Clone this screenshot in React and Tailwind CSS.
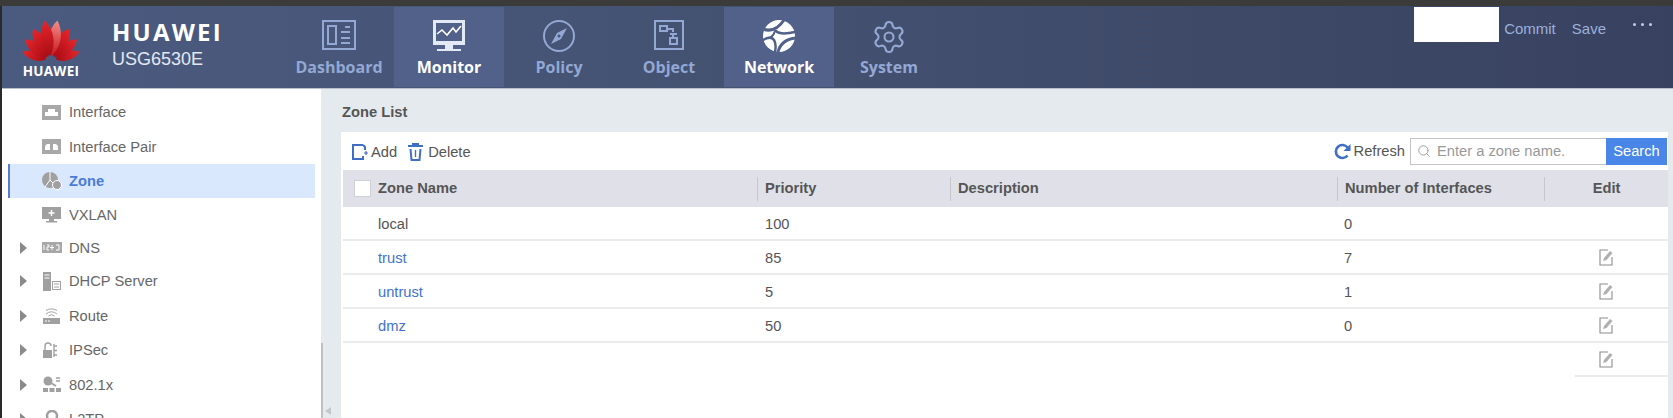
import { Settings, Search } from 'lucide-react';

const sans = 'font-["Liberation_Sans",Arial,sans-serif]';

function Logo() {
    const petals = [
        { a: 72, l: 30, w: 6, c: 'url(#petal)' },
        { a: -72, l: 30, w: 6, c: 'url(#petal)' },
        { a: 50, l: 34, w: 7, c: 'url(#petal)' },
        { a: -50, l: 34, w: 7, c: 'url(#petal)' },
        { a: 29, l: 37, w: 8, c: 'url(#petal)' },
        { a: -29, l: 37, w: 8, c: 'url(#petal)' },
        { a: 9, l: 41, w: 8, c: 'url(#petalTop)' },
        { a: -9, l: 41, w: 8, c: 'url(#petal)' },
    ];
    return (
        <svg width="60" height="42" viewBox="0 0 60 42">
            <defs>
                <linearGradient id="petal" x1="0" y1="0" x2="0" y2="1">
                    <stop offset="0" stopColor="#e8252c" />
                    <stop offset="1" stopColor="#a80c14" />
                </linearGradient>
                <linearGradient id="petalTop" x1="0" y1="0" x2="0" y2="1">
                    <stop offset="0" stopColor="#f0908a" />
                    <stop offset="1" stopColor="#c8141c" />
                </linearGradient>
            </defs>
            {petals.map((p, i) => (
                <path
                    key={i}
                    transform={`translate(30 42) rotate(${p.a})`}
                    d={`M0 -5 C ${-p.w} ${-p.l * 0.4} ${-p.w} ${-p.l * 0.75} 0 ${-p.l} C ${p.w} ${-p.l * 0.75} ${p.w} ${-p.l * 0.4} 0 -5 Z`}
                    fill={p.c}
                />
            ))}
        </svg>
    );
}

function DashboardIcon() {
    return (
        <svg width="36" height="32" viewBox="0 0 36 32" fill="none" stroke="currentColor" strokeWidth="2">
            <rect x="2" y="2" width="32" height="28" />
            <rect x="7" y="7" width="8" height="18" />
            <path d="M24 8h5M20 13h9M20 19h9M20 24h9" />
        </svg>
    );
}

function MonitorIcon() {
    return (
        <svg width="36" height="34" viewBox="0 0 36 34">
            <rect x="2" y="1" width="32" height="25" fill="#e4e9f6" />
            <rect x="5" y="4" width="26" height="18" fill="#52618a" />
            <path d="M6 15l5-4 5 5 6-7 3 4 5-6" fill="none" stroke="#fff" strokeWidth="1.6" />
            <rect x="14" y="26" width="8" height="4" fill="#e4e9f6" />
            <rect x="6" y="30" width="24" height="2" fill="#e4e9f6" />
        </svg>
    );
}

function PolicyIcon() {
    return (
        <svg width="34" height="34" viewBox="0 0 34 34" fill="none" stroke="currentColor" strokeWidth="2">
            <circle cx="17" cy="17" r="15" />
            <path d="M25 9l-10 5-6 11 10-5z" fill="currentColor" stroke="none" />
            <circle cx="17" cy="17" r="1.5" fill="#46567a" stroke="none" />
        </svg>
    );
}

function ObjectIcon() {
    return (
        <svg width="32" height="32" viewBox="0 0 32 32" fill="none" stroke="currentColor" strokeWidth="2">
            <rect x="2" y="2" width="28" height="28" />
            <rect x="7" y="7" width="7" height="5" />
            <rect x="17" y="19" width="7" height="6" />
            <path d="M14 10h6v3M17 15h7M20 15v4" />
        </svg>
    );
}

function NetworkIcon() {
    return (
        <svg width="34" height="34" viewBox="0 0 34 34" fill="none" stroke="#52618a" strokeLinecap="round">
            <circle cx="17" cy="17" r="16" fill="#fff" stroke="none" />
            <path d="M1 10C9 13 16 10 22 1" strokeWidth="3" />
            <path d="M14 12c3 3 10 3 19 1" strokeWidth="2.5" />
            <path d="M13 12c-1 3-2 5-4 6" strokeWidth="2" />
            <path d="M1 21c5-3 9-3 11 0 2 3 2 7 1 12" strokeWidth="2.5" />
            <path d="M16 33c2-8 8-13 18-14" strokeWidth="3" />
        </svg>
    );
}

function NavItem({ label, active, icon }) {
    return (
        <div className={`w-[110px] h-[80px] mt-px flex flex-col items-center ${active ? 'bg-[#52618a] text-white' : 'text-[#93a8d4]'}`}>
            <div className="h-[38px] mt-[12px] flex items-start justify-center">{icon}</div>
            <span className='text-[16px] font-bold leading-[20px] font-["Open_Sans",sans-serif]'>{label}</span>
        </div>
    );
}

function Arrow() {
    return <span className="w-0 h-0 border-y-[6px] border-y-transparent border-l-[7px] border-l-[#8a8a8a]" />;
}

const sideIcons = {
    iface: (
        <svg width="19" height="15" viewBox="0 0 19 15">
            <rect width="19" height="15" fill="#a8a8a8" />
            <path d="M3 11V7h3V4h7v3h3v4z" fill="#fff" />
        </svg>
    ),
    pair: (
        <svg width="19" height="15" viewBox="0 0 19 15">
            <rect width="19" height="15" fill="#a8a8a8" />
            <path d="M3 11V7l2-2h3v6zM11 11V5h3l2 2v4z" fill="#fff" />
        </svg>
    ),
    zone: (
        <svg width="20" height="18" viewBox="0 0 20 18">
            <circle cx="8" cy="8" r="8" fill="#a0a0a0" />
            <path d="M8 8L3 15M8 8l5 5M8 0v8" stroke="#fff" strokeWidth="1" />
            <circle cx="15" cy="13" r="4.5" fill="#a0a0a0" stroke="#fff" strokeWidth="1" />
        </svg>
    ),
    vxlan: (
        <svg width="19" height="16" viewBox="0 0 19 16">
            <rect width="19" height="12" fill="#a0a0a0" />
            <path d="M9.5 3v6M6.5 6h6" stroke="#fff" strokeWidth="1.4" />
            <path d="M7 12h5v2h3v1.5H4V14h3z" fill="#a0a0a0" />
        </svg>
    ),
    dns: (
        <svg width="20" height="11" viewBox="0 0 20 11">
            <rect width="20" height="11" fill="#a8a8a8" />
            <path d="M2 3v5M5 3h2v2H5v3h2M10 3v5M8 5.5h4M14 3h3v5h-3" stroke="#fff" strokeWidth="1" fill="none" />
        </svg>
    ),
    dhcp: (
        <svg width="19" height="19" viewBox="0 0 19 19">
            <rect x="1" width="8" height="19" fill="#a0a0a0" />
            <path d="M2.5 3h5M2.5 6h5" stroke="#fff" />
            <rect x="10.5" y="9.5" width="8" height="8" fill="none" stroke="#a0a0a0" />
            <path d="M12 12h5M12 15h5" stroke="#a0a0a0" />
        </svg>
    ),
    route: (
        <svg width="19" height="18" viewBox="0 0 19 18" fill="none">
            <path d="M4 7a8 8 0 0 1 11 0M6.5 9a4.5 4.5 0 0 1 6 0" stroke="#a0a0a0" />
            <path d="M4 3.5a11 11 0 0 1 11 0" stroke="#a0a0a0" />
            <rect x="1" y="11" width="17" height="6" fill="#a0a0a0" />
            <path d="M3 14h2M6 14h2" stroke="#fff" />
        </svg>
    ),
    ipsec: (
        <svg width="18" height="17" viewBox="0 0 18 17" fill="none">
            <path d="M3 8V4a3 3 0 0 1 6 0" stroke="#a0a0a0" strokeWidth="1.4" />
            <rect x="1" y="8" width="9" height="8" fill="#a0a0a0" />
            <path d="M12 4h3M12 8.5h3M12 13h3M12 2v13" stroke="#a0a0a0" strokeWidth="1.4" />
        </svg>
    ),
    dot1x: (
        <svg width="19" height="17" viewBox="0 0 19 17">
            <circle cx="6" cy="5" r="4.5" fill="#a0a0a0" />
            <path d="M9 7l5 3" stroke="#a0a0a0" strokeWidth="2" />
            <path d="M14 2h4M14 5h4" stroke="#a0a0a0" strokeWidth="1.6" />
            <rect x="1" y="12" width="5" height="4" fill="#a0a0a0" />
            <rect x="7.5" y="12" width="5" height="4" fill="#a0a0a0" />
            <rect x="14" y="12" width="5" height="4" fill="#a0a0a0" />
        </svg>
    ),
    l2tp: (
        <svg width="19" height="18" viewBox="0 0 19 18">
            <circle cx="10" cy="6" r="5" fill="none" stroke="#a0a0a0" strokeWidth="2.5" />
        </svg>
    ),
};

const sideItems = [
    { label: 'Interface', icon: 'iface', h: 'h-[34.4px]' },
    { label: 'Interface Pair', icon: 'pair', h: 'h-[34.4px]' },
    { label: 'Zone', icon: 'zone', selected: true, h: 'h-[34.4px]' },
    { label: 'VXLAN', icon: 'vxlan', h: 'h-[33px]' },
    { label: 'DNS', icon: 'dns', tree: true, h: 'h-[33px]' },
    { label: 'DHCP Server', icon: 'dhcp', tree: true, h: 'h-[34.4px]' },
    { label: 'Route', icon: 'route', tree: true, h: 'h-[34.4px]' },
    { label: 'IPSec', icon: 'ipsec', tree: true, h: 'h-[34.4px]' },
    { label: '802.1x', icon: 'dot1x', tree: true, h: 'h-[34.4px]' },
    { label: 'L2TP', icon: 'l2tp', tree: true, h: 'h-[34.4px]' },
];

function SideRow({ item }) {
    return (
        <div className={`shrink-0 ${item.h} ml-[6px] mr-[6px] flex items-center border-l-2 ${item.selected ? 'bg-[#d9e8fd] border-l-[#4f80d6]' : 'border-l-transparent'}`}>
            <span className="w-[10px]" />
            <span className="w-[22px] flex items-center">{item.tree && <Arrow />}</span>
            <span className="w-[27px] flex items-center">{sideIcons[item.icon]}</span>
            <span className={`text-[14.7px] ${item.selected ? 'text-[#4a7bd8] font-bold' : 'text-[#666]'}`}>{item.label}</span>
        </div>
    );
}

function EditIcon() {
    return (
        <svg width="15" height="17" viewBox="0 0 15 17" fill="none">
            <path d="M9 1H1v15h12V8" stroke="#8c8c8c" strokeWidth="1.1" />
            <path d="M4 12l1-3 6-7 2.5 2-6 7z" fill="#b0b0b0" />
        </svg>
    );
}

const zones = [
    { name: 'local', priority: '100', count: '0' },
    { name: 'trust', priority: '85', count: '7', link: true },
    { name: 'untrust', priority: '5', count: '1', link: true },
    { name: 'dmz', priority: '50', count: '0', link: true },
];

const gridCols = 'grid grid-cols-[414px_193px_387px_207px_124px]';

function HeaderCell({ label }) {
    return (
        <div className="flex items-center">
            <span className="h-[24px] border-l border-l-[#c6c6cf]" />
            <span className="pl-[7px] text-[14.7px] font-bold text-[#555]">{label}</span>
        </div>
    );
}

function App() {
    return (
        <div className={`w-full h-[418px] overflow-hidden flex flex-col bg-[#2a2a2a] pl-[2px] ${sans}`}>
            <div className="h-[6px] shrink-0 -ml-[2px] bg-[#3b3b39]" />

            <div className="h-[82px] shrink-0 flex bg-gradient-to-r from-[#4b5b80] via-[#43506f] to-[#384160]">
                <div className="w-[98px] flex flex-col items-center pt-[13px]">
                    <Logo />
                    <span className='text-[13.5px] font-bold text-white leading-[14px] tracking-[0.3px] mt-[3px] font-["Open_Sans",sans-serif]'>HUAWEI</span>
                </div>
                <div className="w-[184px] pl-[12px] flex flex-col pt-[12px]">
                    <span className='text-[24px] font-bold text-white leading-[28px] tracking-[2.2px] font-["Open_Sans",sans-serif]'>HUAWEI</span>
                    <span className="text-[18px] text-[#e4e8f2] leading-[20px] mt-[3px]">USG6530E</span>
                </div>
                <NavItem label="Dashboard" icon={<DashboardIcon />} />
                <NavItem label="Monitor" active icon={<MonitorIcon />} />
                <NavItem label="Policy" icon={<PolicyIcon />} />
                <NavItem label="Object" icon={<ObjectIcon />} />
                <NavItem label="Network" active icon={<NetworkIcon />} />
                <NavItem label="System" icon={<Settings size={36} strokeWidth={1.4} />} />
                <div className="flex-1" />
                <div className="flex items-start text-[15px] text-[#9bb0dc]">
                    <div className="w-[85px] h-[35px] mt-px bg-white" />
                    <span className="ml-[5px] mt-[14px] leading-[18px]">Commit</span>
                    <span className="ml-[16px] mt-[14px] leading-[18px]">Save</span>
                    <span className="ml-[27px] mr-[21px] mt-[17px] flex gap-[5px]">
                        <i className="w-[3px] h-[3px] rounded-full bg-[#c4cfe6]" />
                        <i className="w-[3px] h-[3px] rounded-full bg-[#c4cfe6]" />
                        <i className="w-[3px] h-[3px] rounded-full bg-[#c4cfe6]" />
                    </span>
                </div>
            </div>

            <div className="flex-1 min-h-0 flex border-t border-t-[#b8c0cc] bg-[#e5eaee]">
                <div className="w-[319px] shrink-0 bg-white pt-[6px] flex flex-col overflow-hidden">
                    {sideItems.map((item) => <SideRow key={item.label} item={item} />)}
                </div>
                <div className="w-[20px] shrink-0 flex flex-col items-start justify-end">
                    <div className="w-[2px] h-[75px] bg-[#c0c0c0] relative">
                        <span className="absolute left-[4px] bottom-[3px] w-0 h-0 border-y-[4px] border-y-transparent border-r-[6px] border-r-[#c4c8cc]" />
                    </div>
                </div>
                <div className="flex-1 min-w-0 flex flex-col pr-[5px]">
                    <div className="h-[43px] shrink-0 flex items-center text-[14.7px] font-bold text-[#555] pl-px pt-[4px]">Zone List</div>
                    <div className="flex-1 min-h-0 bg-white pl-[2px]">
                        <div className="h-[38px] flex items-center justify-between">
                            <div className="flex items-center text-[14.7px] text-[#555] pl-[8px] pt-[2px]">
                                <svg width="18" height="18" viewBox="0 0 18 18" fill="none" className="mr-[2px]">
                                    <path d="M12 2H2v14h10v-3M12 2l2 2v3" stroke="#3f6fc4" strokeWidth="2" />
                                    <path d="M13 10h4M15 8v4" stroke="#3f6fc4" strokeWidth="1.2" />
                                </svg>
                                <span>Add</span>
                                <svg width="15" height="18" viewBox="0 0 15 18" fill="none" stroke="#3f6fc4" strokeWidth="2" className="ml-[11px] mr-[5px]">
                                    <path d="M0 3h15M5 3V1h5v2" />
                                    <path d="M2.5 6l1 11h8l1-11" />
                                    <path d="M7.5 7v7" strokeWidth="1.4" />
                                </svg>
                                <span>Delete</span>
                            </div>
                            <div className="flex items-center text-[14.7px] text-[#555] mr-px">
                                <svg width="17" height="17" viewBox="0 0 17 17" fill="none" className="mr-[3px]">
                                    <path d="M13.5 12.5a6.5 6.5 0 1 1 0-8" stroke="#3f6fc4" strokeWidth="2.6" />
                                    <path d="M16.5 1v7h-7z" fill="#3f6fc4" />
                                </svg>
                                <span>Refresh</span>
                                <div className="w-[196px] h-[27px] ml-[5px] border border-[#c4c4c4] border-r-0 flex items-center pl-[6px] text-[#999]">
                                    <Search size={14} strokeWidth={1.6} className="mr-[6px]" />
                                    <span>Enter a zone name.</span>
                                </div>
                                <div className="w-[61px] h-[27px] bg-[#4a86e8] text-white flex items-center justify-center">Search</div>
                            </div>
                        </div>

                        <div className={`${gridCols} h-[37px] bg-[#e0e1e8]`}>
                            <div className="flex items-center pl-[11px]">
                                <span className="w-[17px] h-[17px] bg-white border border-[#cfcfd6]" />
                                <span className="pl-[7px] text-[14.7px] font-bold text-[#555]">Zone Name</span>
                            </div>
                            <HeaderCell label="Priority" />
                            <HeaderCell label="Description" />
                            <HeaderCell label="Number of Interfaces" />
                            <div className="flex items-center">
                                <span className="h-[24px] border-l border-l-[#c6c6cf]" />
                                <span className="flex-1 text-center text-[14.7px] font-bold text-[#555]">Edit</span>
                            </div>
                        </div>

                        {zones.map((z) => (
                            <div key={z.name} className={`${gridCols} h-[34px] border-b-2 border-b-[#ebebeb] text-[14.7px] text-[#555]`}>
                                <div className={`flex items-center pl-[35px] pt-[2px] ${z.link ? 'text-[#3f72cf]' : ''}`}>{z.name}</div>
                                <div className="flex items-center pl-[8px] pt-[2px]">{z.priority}</div>
                                <div />
                                <div className="flex items-center pl-[7px] pt-[2px]">{z.count}</div>
                                <div className="flex items-center justify-center">{z.link && <EditIcon />}</div>
                            </div>
                        ))}
                        <div className="flex justify-end">
                            <div className="w-[93px] h-[34px] border-b-2 border-b-[#ebebeb] flex items-center pl-[24px]"><EditIcon /></div>
                        </div>
                    </div>
                </div>
            </div>
        </div>
    );
}

export default App;
